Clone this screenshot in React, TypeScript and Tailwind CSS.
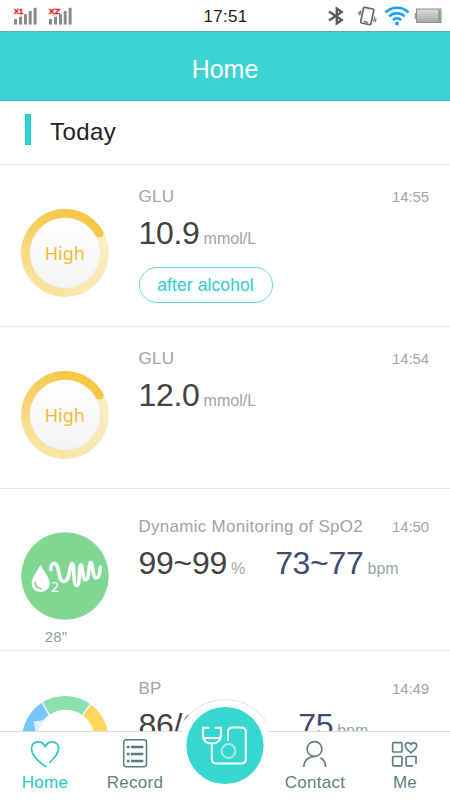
import type { ReactNode } from 'react';

type Reading = {
  value: string;
  unit: string;
  accent?: boolean;
};

type RecordRowProps = {
  icon: ReactNode;
  title: string;
  time: string;
  readings: Reading[];
  tag?: string;
  caption?: string;
  compact?: boolean;
};

const Signal = ({ label }: { label: string }) => (
  <svg className="h-[18px] w-6" viewBox="0 0 24 18">
    <g fill="#8a8a8a">
      <rect x="1" y="12" width="3" height="5.6" />
      <rect x="6" y="9.7" width="3" height="7.9" />
      <rect x="11" y="7.2" width="3" height="10.4" />
      <rect x="15.7" y="4" width="3" height="13.6" />
      <rect x="20.6" y="0.8" width="3" height="16.8" />
    </g>
    <text x="0.8" y="6.6" textLength={label === 'X1' ? 9.5 : 11.5} lengthAdjust="spacingAndGlyphs" fill="#ff1414" stroke="#ff1414" strokeWidth="0.3" className="text-[7px] font-bold">
      {label}
    </text>
  </svg>
);

const StatusBar = () => (
  <div className="flex h-[31px] shrink-0 items-center bg-white pl-[13px] pr-2">
    <div className="flex w-[150px] gap-[11px]">
      <Signal label="X1" />
      <Signal label="XZ" />
    </div>
    <div className="flex-1 pt-[2px] text-center text-[17px] tracking-[0.25px] text-[#1c1c1c]">17:51</div>
    <div className="flex w-[154px] items-center justify-end">
      {/* Bluetooth */}
      <svg className="mr-[13px] h-5 w-4" viewBox="0 0 16 20" fill="none" stroke="#5a5a5a" strokeWidth="2.4">
        <path d="M1 5.5 13.7 14 8.8 17.4V2.600l4.900 3.400L1 14.500" />
      </svg>
      {/* Vibrate */}
      <svg className="mr-[7px] h-5 w-5" viewBox="0 0 20 20" fill="none" stroke="#666">
        <rect x="5" y="2" width="10.5" height="16" rx="1.2" strokeWidth="1.7" transform="rotate(12 10.2 9.8)" />
        <path d="M6.7 15.4l4.2.9" strokeWidth="1.200" />
        <path d="M3.8 4.300 2.700 9.500M2.200 5.300 1.600 8.200M16.600 15.700l1.200-5M18.300 15.900l.8-3.200" strokeWidth="1.100" />
      </svg>
      {/* Wifi */}
      <svg className="mr-1 h-5 w-[26px]" viewBox="0 0 26 20" fill="none" stroke="#11a3f2" strokeWidth="2.5">
        <path d="M1.500 6.500a16.500 16.500 0 0 1 23 0" />
        <path d="M5.200 10.400a11.400 11.400 0 0 1 15.600 0" />
        <path d="M8.800 14a6.200 6.200 0 0 1 8.400 0" />
        <circle cx="13" cy="17.600" r="2" fill="#11a3f2" stroke="none" />
      </svg>
      {/* Battery */}
      <svg className="h-4 w-7" viewBox="0 0 28 16">
        <defs>
          <linearGradient id="battery" x1="0" y1="0" x2="0" y2="1">
            <stop offset="0" stopColor="#dedede" />
            <stop offset="1" stopColor="#a6a6a6" />
          </linearGradient>
        </defs>
        <path d="M2.500 5H.6v6h1.900z" fill="#a2a2a2" />
        <rect x="2.500" y="1" width="24.500" height="13.500" fill="url(#battery)" stroke="#8e8e8e" />
        <path d="M25.200 2v11.500" stroke="#67b567" strokeWidth="1.800" />
      </svg>
    </div>
  </div>
);

const Gauge = () => (
  <svg className="size-[88px]" viewBox="0 0 88 88">
    <defs>
      <linearGradient id="ring" x1="0.7" y1="0" x2="0.3" y2="1">
        <stop offset="0" stopColor="#f6c744" />
        <stop offset="0.5" stopColor="#f7d472" />
        <stop offset="1" stopColor="#fae5a4" />
      </linearGradient>
      <linearGradient id="ringTail" x1="0.5" y1="0" x2="0.3" y2="1">
        <stop offset="0" stopColor="#fbf0cc" />
        <stop offset="1" stopColor="#fae6ab" />
      </linearGradient>
      <linearGradient id="dial" x1="0" y1="0" x2="0" y2="1">
        <stop offset="0" stopColor="#fff" />
        <stop offset="1" stopColor="#f4f4f4" />
      </linearGradient>
    </defs>
    <circle cx="44" cy="44" r="35.800" fill="#eeeeee" />
    <circle cx="44" cy="43.600" r="34.800" fill="url(#dial)" />
    <circle cx="44" cy="44" r="39.600" fill="none" stroke="url(#ringTail)" strokeWidth="8.600" />
    <path d="M44 83.600A39.600 39.600 0 1 1 78.200 24" fill="none" stroke="url(#ring)" strokeWidth="8.600" />
    <circle cx="78.200" cy="24.300" r="4.300" fill="#f6c744" />
    <text x="43.800" y="50.500" textAnchor="middle" fill="#f0bd35" className="font-['Noto_Sans',sans-serif] text-[18px]">
      High
    </text>
  </svg>
);

const Oxygen = () => (
  <svg className="size-[88px]" viewBox="0 0 88 88">
    <circle cx="44" cy="44" r="43.800" fill="#7fd792" />
    <path d="M19.500 32.800c3 6.300 9.200 12.600 9.200 18.500 0 5-3.600 8.700-9 8.700s-9-3.700-9-8.700c0-5.900 5.800-12.200 8.800-18.500z" fill="#fff" />
    <path d="M14 50.300c.2 3.200 2.300 5.900 5.800 6.300" fill="none" stroke="#7fd792" strokeWidth="1.800" strokeLinecap="round" />
    <path
      d="M30 37.500C29.600 34 31 31.500 33.300 31.500C39 31.500 36.500 49.500 42.700 49.500C49.500 49.500 48.500 31.500 51 31.500C54 31.500 51.500 53.500 55.700 53.500C59.500 53.500 57.800 33 60 33C62 33 61.300 47.800 64.700 47.800C68.500 47.800 67.500 30.500 69.700 30.500C72 30.500 71.500 46 75.300 46C78.300 46 79 40.500 79.200 35"
      fill="none"
      stroke="#fff"
      strokeWidth="3.600"
      strokeLinecap="round"
      strokeLinejoin="round"
    />
    <text x="30" y="60.300" fill="#fff" className="font-['Noto_Sans',sans-serif] text-[14px]">
      2
    </text>
  </svg>
);

const PressureGauge = () => (
  <svg className="size-[88px]" viewBox="0 0 88 88">
    <g transform="translate(0 2)">
      <path d="M1 44A43.500 43.500 0 0 1 21.300 6.500L28.200 19A29 29 0 0 0 15 44z" fill="#78c6fc" />
      <path d="M21.300 6.500A43.500 43.500 0 0 1 69.500 8.200L61.800 19.200A29 29 0 0 0 28.200 19z" fill="#89e1af" />
      <path d="M69.500 8.200A43.500 43.500 0 0 1 87.500 44H73A29 29 0 0 0 61.800 19.200z" fill="#ffd65e" />
      <path d="M20.800 5.500 28.700 20M70.100 7.300 61 20.200" stroke="#fff" strokeWidth="1.200" />
      <path d="M12.500 25.500 24 24 15 37z" fill="#dff0fe" />
    </g>
  </svg>
);

const RecordRow = ({ icon, title, time, readings, tag, caption, compact }: RecordRowProps) => (
  <div className="flex h-[162px] shrink-0 border-b border-[#e9e9e9] pl-[21px] pr-[21px]">
    <div className={`flex w-[88px] shrink-0 flex-col items-center ${compact ? 'pt-[43px]' : 'pt-[43.5px]'}`}>
      {icon}
      {caption && <span className="mt-[7px] mr-[18px] text-[15px] leading-[20px] tracking-[0.1px] text-[#8fa09d]">{caption}</span>}
    </div>
    <div className={`ml-[29.5px] flex flex-1 flex-col ${compact ? 'pt-[27px]' : 'pt-[21px]'}`}>
      <div className="flex items-baseline justify-between leading-[22px]">
        <span className="text-[17px] tracking-[0.28px] text-[#a3a3a3]">{title}</span>
        <span className="text-[15px] tracking-[-0.1px] text-[#a3a3a3]">{time}</span>
      </div>
      <div className="mt-[6px] flex gap-[30px] whitespace-nowrap leading-[38px]">
        {readings.map(({ value, unit, accent }) => (
          <div key={unit} className="flex items-baseline gap-[4px]">
            <span className={`text-[32px] tracking-[-0.3px] ${accent ? 'text-[#3e4a6e]' : 'text-[#434343]'}`}>{value}</span>
            <span className={`text-[16px] ${accent ? 'text-[#95a5a2]' : 'text-[#a3a3a3]'}`}>{unit}</span>
          </div>
        ))}
      </div>
      {tag && (
        <span className="mt-[15px] flex h-9 min-h-9 w-[134px] items-center justify-center rounded-full border border-[#67d7da] pt-[1px] text-[17.5px] leading-none tracking-[0.1px] text-[#2fcccf] -translate-y-[6px]">
          {tag}
        </span>
      )}
    </div>
  </div>
);

const HeartIcon = () => (
  <svg className="h-[30px] w-[32px]" viewBox="0 0 32 30" fill="none" stroke="#24c8c5" strokeWidth="1.700" strokeLinecap="round" strokeLinejoin="round">
    <path d="M16.800 28.500C10.500 24.400 2.500 17.200 2.500 10.800 2.500 6.400 5.200 3.900 9.100 3.900c3.400 0 5.700 1.800 7.100 4.800 1.300-3 3.700-4.800 7-4.800 4 0 6.400 2.800 6.400 6.900 0 4.500-4.300 9.400-8.900 13.700" />
  </svg>
);

const RecordIcon = () => (
  <svg className="h-[30px] w-[26px]" viewBox="0 0 26 30" fill="none" stroke="#547d82">
    <rect x="1.700" y="1.800" width="22.800" height="27" rx="2.500" strokeWidth="1.500" />
    <path d="M4.800 9h2.700m1.500 0h12.300M4.800 16h2.700m1.500 0h12.300M4.800 23h2.700m1.500 0h12.300" strokeWidth="2.700" />
  </svg>
);

const ContactIcon = () => (
  <svg className="h-[30px] w-[26px]" viewBox="0 0 26 30" fill="none" stroke="#607f84" strokeWidth="1.700">
    <circle cx="12.500" cy="11" r="7.400" />
    <path d="M1.800 29c.2-6.300 4.500-10.500 10.700-10.500M18.500 19.700c3.300 2 5.200 5.100 5.300 9.300" />
  </svg>
);

const MeIcon = () => (
  <svg className="h-[30px] w-[28px]" viewBox="0 0 28 30" fill="none" stroke="#607f84" strokeWidth="1.700" strokeLinejoin="round">
    <rect x="1.700" y="4.700" width="9.300" height="9.300" rx="0.800" />
    <rect x="1.700" y="18.500" width="9.300" height="9.300" rx="0.800" />
    <path d="M21.800 27.800h-5.600a1 1 0 0 1-1-1v-7.300a1 1 0 0 1 1-1h8.800v7.300" />
    <path d="M20 14.800c-3-2.200-5.700-4.700-5.700-7.200 0-3.200 4.200-3.700 5.700-.9 1.500-2.800 5.700-2.300 5.700.9 0 2.500-2.700 5-5.700 7.200z" />
  </svg>
);

const NavItem = ({ icon, label, active }: { icon: ReactNode; label: string; active?: boolean }) => (
  <a href="#" className={`flex w-[90px] flex-col items-center pt-[6px] text-[17px] leading-[22px] tracking-[0.3px] ${active ? 'text-[#24c8c5]' : 'text-[#607f84]'}`}>
    {icon}
    <span className="mt-[4px]">{label}</span>
  </a>
);

const MeasureButton = () => (
  <button className="absolute left-[183px] top-[-33px] h-[101px] w-[84.5px]">
    <svg className="size-full" viewBox="1 0 84.500 101" fill="none">
      <circle cx="43" cy="50.500" r="50" fill="#fff" stroke="#e2e2e2" />
      <path d="M0 24h86v77H0z" fill="#fff" />
      <circle cx="43" cy="46.500" r="38.600" fill="#36d7ce" />
      <g stroke="#fff" strokeWidth="2" strokeLinecap="round" strokeLinejoin="round">
        <path d="M26.500 28.700h-5.600v6.800c0 5.600 3.300 9 9 9s9.100-3.400 9.100-9v-6.800h-5.600M21.300 39h17.500" />
        <path d="M29.800 45v14.500c0 3.300 1.700 5 5 5h24.500c2.900 0 4.500-1.600 4.500-4.500V33c0-2.900-1.600-4.500-4.500-4.500h-8.800c-2.900 0-4.500 1.600-4.500 4.500v8" />
      </g>
      <circle cx="46.500" cy="52" r="6.900" stroke="#a5ece7" strokeWidth="2" />
    </svg>
  </button>
);

const BottomNav = () => (
  <nav className="relative flex h-[69px] shrink-0 border-t border-[#dcdcdc] bg-white">
    <NavItem icon={<HeartIcon />} label="Home" active />
    <NavItem icon={<RecordIcon />} label="Record" />
    <div className="w-[90px]" />
    <NavItem icon={<ContactIcon />} label="Contact" />
    <NavItem icon={<MeIcon />} label="Me" />
    <MeasureButton />
  </nav>
);

const records: RecordRowProps[] = [
  { icon: <Gauge />, title: 'GLU', time: '14:55', readings: [{ value: '10.9', unit: 'mmol/L' }], tag: 'after alcohol' },
  { icon: <Gauge />, title: 'GLU', time: '14:54', readings: [{ value: '12.0', unit: 'mmol/L' }] },
  {
    icon: <Oxygen />,
    title: 'Dynamic Monitoring of SpO2',
    time: '14:50',
    readings: [
      { value: '99~99', unit: '%' },
      { value: '73~77', unit: 'bpm', accent: true },
    ],
    caption: '28"',
    compact: true,
  },
  {
    icon: <PressureGauge />,
    title: 'BP',
    time: '14:49',
    readings: [
      { value: '86/60', unit: 'mmHg' },
      { value: '75', unit: 'bpm', accent: true },
    ],
    compact: true,
  },
];

export default function App() {
  return (
    <div className="flex h-[800px] w-[450px] flex-col overflow-hidden bg-white font-['Liberation_Sans',Arial,sans-serif]">
      <StatusBar />
      <header className="flex h-[70px] shrink-0 items-center justify-center border-b border-t border-b-[#10cbce] border-t-[#57b0b2] bg-[#3bd3d4] pt-[7px] text-[25px] text-white">
        Home
      </header>
      <main className="flex min-h-0 flex-1 flex-col overflow-hidden">
        <div className="flex h-[64px] shrink-0 items-center border-b border-[#e5e5e5] pl-[25px]">
          <div className="mb-[7px] h-[31px] w-[6px] border border-[#14cbcc] bg-[#35d2d2]" />
          <h1 className="mb-[2px] ml-[19px] text-[24px] tracking-[0.4px] text-[#222]">Today</h1>
        </div>
        {records.map((record) => (
          <RecordRow key={record.time} {...record} />
        ))}
      </main>
      <BottomNav />
    </div>
  );
}
